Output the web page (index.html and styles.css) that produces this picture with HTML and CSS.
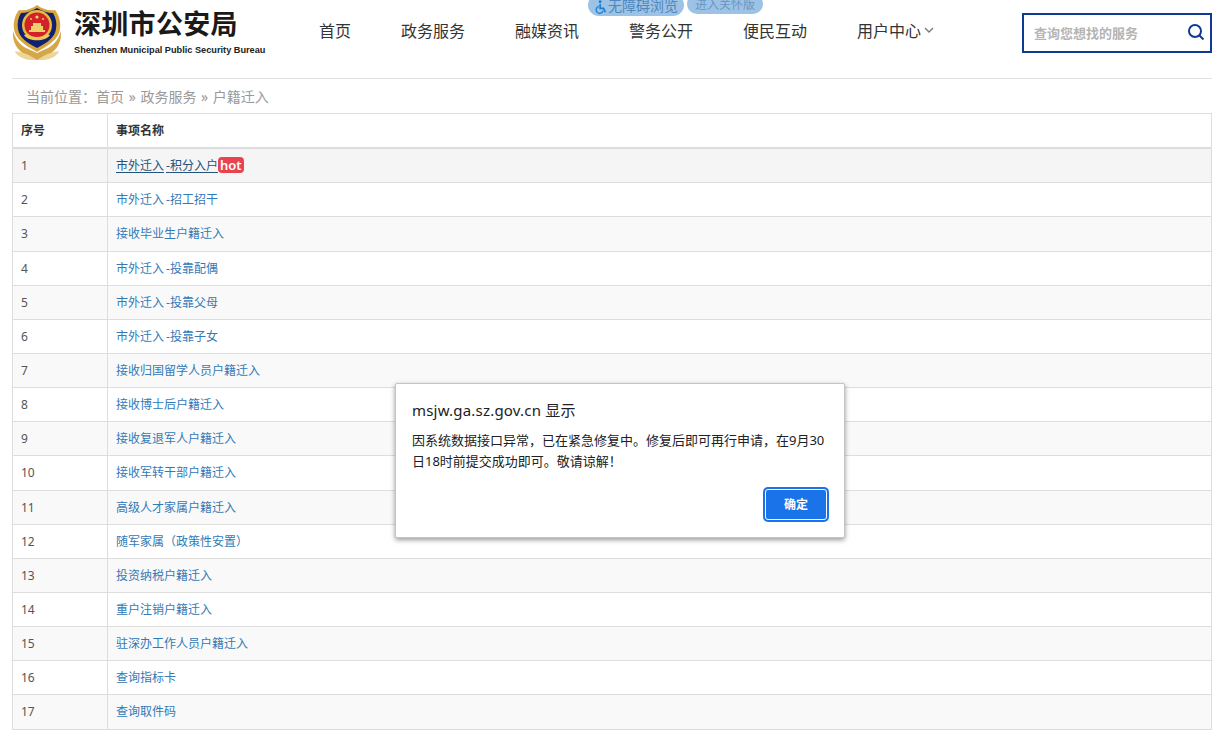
FILE: index.html
```html
<!DOCTYPE html>
<html lang="zh-CN">
<head>
<meta charset="utf-8">
<title>深圳市公安局</title>
<link rel="stylesheet" href="styles.css">
</head>
<body>
<div class="page">
  <header class="header">
    <a class="brand">
      <svg class="emblem" viewBox="0 0 50 56" width="50" height="56">
        <path d="M1 26C0 38 6 46 14 50L20 55H30L36 50C44 46 50 38 49 26C47 33 43 39 36 43L25 48L14 43C7 39 3 33 1 26Z" fill="#d5a748"/>
        <path d="M3 46C8 47 15 48 25 55C35 48 42 47 47 46C46 50 40 54 32 55H18C10 54 4 50 3 46Z" fill="#ecd596"/>
        <path d="M25 0C30 4 37 6 43 5C47 10 49 17 48 24C47 33 38 40 25 47C12 40 3 33 2 24C1 17 3 10 7 5C13 6 20 4 25 0Z" fill="#d8a63f"/>
        <path d="M25 3C30 6 36 8 41 8C44 13 45 18 44 24C43 32 35 38 25 43C15 38 7 32 6 24C5 18 6 13 9 8C14 8 20 6 25 3Z" fill="#12216f"/>
        <circle cx="25" cy="20" r="15" fill="#e6b93f"/>
        <circle cx="25" cy="20" r="12.5" fill="#d2232a"/>
        <path d="M17 25H33V27H17ZM19 21H31V25H19ZM21 18H29V21H21Z" fill="#f0cf6a"/>
        <circle cx="25" cy="12" r="1.6" fill="#f5d76a"/>
        <circle cx="19" cy="14" r=".9" fill="#f5d76a"/>
        <circle cx="31" cy="14" r=".9" fill="#f5d76a"/>
        <path d="M12 30C16 37 34 37 38 30L35 29C31 33 19 33 15 29Z" fill="#eec95a"/>
      </svg>
      <span class="brand-text">
        <span class="brand-title">深圳市公安局</span>
        <span class="brand-sub">Shenzhen Municipal Public Security Bureau</span>
      </span>
    </a>
    <div class="nav-col">
      <div class="pills">
        <span class="pill pill-a">
          <svg class="wheel" viewBox="0 0 16 16" width="14" height="14"><circle cx="7" cy="2" r="1.6" fill="#1b7fd0"/><path d="M7 4.5V9.5H11L13 14" fill="none" stroke="#1b7fd0" stroke-width="1.9"/><path d="M5.4 7.4A4 4 0 1 0 10.4 12.2" fill="none" stroke="#1b7fd0" stroke-width="1.5"/></svg>无障碍浏览
        </span>
        <span class="pill pill-b">进入关怀版</span>
      </div>
      <nav class="nav">
        <a>首页</a>
        <a>政务服务</a>
        <a>融媒资讯</a>
        <a>警务公开</a>
        <a>便民互动</a>
        <a class="nav-user">用户中心<svg viewBox="0 0 10 6" width="10" height="6"><path d="M1 1L5 5L9 1" fill="none" stroke="#777" stroke-width="1.3"/></svg></a>
      </nav>
    </div>
    <div class="search">
      <span class="search-text">查询您想找的服务</span>
      <svg viewBox="0 0 18 18" width="18" height="18"><circle cx="8" cy="8" r="6" fill="none" stroke="#0f3a94" stroke-width="2"/><path d="M12.5 12.5L16.5 16.5" stroke="#0f3a94" stroke-width="2"/></svg>
    </div>
  </header>
  <div class="crumb">当前位置：首页 <i>»</i> 政务服务 <i>»</i> 户籍迁入</div>
  <table class="table">
    <thead><tr><th class="c1">序号</th><th>事项名称</th></tr></thead>
    <tbody>
      <tr class="hover"><td>1</td><td><a class="active">市外迁入<span class="dash">-</span>积分入户</a><span class="hot">hot</span></td></tr>
      <tr><td>2</td><td><a>市外迁入<span class="dash">-</span>招工招干</a></td></tr>
      <tr><td>3</td><td><a>接收毕业生户籍迁入</a></td></tr>
      <tr><td>4</td><td><a>市外迁入<span class="dash">-</span>投靠配偶</a></td></tr>
      <tr><td>5</td><td><a>市外迁入<span class="dash">-</span>投靠父母</a></td></tr>
      <tr><td>6</td><td><a>市外迁入<span class="dash">-</span>投靠子女</a></td></tr>
      <tr><td>7</td><td><a>接收归国留学人员户籍迁入</a></td></tr>
      <tr><td>8</td><td><a>接收博士后户籍迁入</a></td></tr>
      <tr><td>9</td><td><a>接收复退军人户籍迁入</a></td></tr>
      <tr><td>10</td><td><a>接收军转干部户籍迁入</a></td></tr>
      <tr><td>11</td><td><a>高级人才家属户籍迁入</a></td></tr>
      <tr><td>12</td><td><a>随军家属（政策性安置）</a></td></tr>
      <tr><td>13</td><td><a>投资纳税户籍迁入</a></td></tr>
      <tr><td>14</td><td><a>重户注销户籍迁入</a></td></tr>
      <tr><td>15</td><td><a>驻深办工作人员户籍迁入</a></td></tr>
      <tr><td>16</td><td><a>查询指标卡</a></td></tr>
      <tr><td>17</td><td><a>查询取件码</a></td></tr>
    </tbody>
  </table>
</div>
<div class="dialog">
  <div class="dialog-title">msjw.ga.sz.gov.cn 显示</div>
  <div class="dialog-body">因系统数据接口异常，已在紧急修复中。修复后即可再行申请，在9月30日18时前提交成功即可。敬请谅解！</div>
  <div class="dialog-actions"><button class="ok">确定</button></div>
</div>
</body>
</html>
```
FILE: styles.css
```css
* { box-sizing: border-box; }
html, body { margin: 0; height: 743px; overflow: hidden; background: #fff; }
body { font-family: "Noto Sans", "Noto Sans CJK SC", sans-serif; font-size: 12px; color: #333; position: relative; }
.page { width: 1200px; margin-left: 12px; }

.header { height: 79px; border-bottom: 1px solid #e2e2e2; display: flex; align-items: flex-start; overflow: hidden; }
.brand { display: flex; width: 307px; flex: none; padding-top: 5px; }
.emblem { flex: none; margin-right: 12px; }
.brand-text { display: flex; flex-direction: column; }
.brand-title { font-size: 27px; letter-spacing: .3px; line-height: 30px; font-weight: 700; color: #1a1a1a; font-family: "Noto Sans CJK SC", sans-serif; margin-top: 3px; }
.brand-sub { font: 700 9.2px/12px "Liberation Sans", sans-serif; color: #222; margin-top: 6px; white-space: nowrap; }

.nav-col { width: 703px; flex: none; }
.pills { display: flex; gap: 3px; margin-left: 269px; margin-top: -6px; height: 22px; align-items: flex-start; }
.pill { background: #9cc3e6; color: #4f87bd; line-height: 22px; height: 22px; border-radius: 11px; display: flex; align-items: center; white-space: nowrap; }
.pill-a { width: 96px; padding: 2px 0 0 6px; font-size: 14px; }
.pill-b { width: 76px; height: 20px; line-height: 20px; padding-top: 1px; justify-content: center; color: #6a97c4; font-size: 12px; }
.wheel { flex: none; margin-top: 1px; }

.nav { display: flex; gap: 50px; margin-top: 2px; }
.nav a { font-size: 16px; line-height: 24px; color: #333; white-space: nowrap; font-family: "Noto Sans CJK SC", sans-serif; }
.nav-user { display: flex; align-items: center; gap: 3px; }

.search { width: 190px; height: 40px; margin-top: 13px; border: 2px solid #0f3a94; display: flex; align-items: center; justify-content: space-between; padding: 0 5px 2px 10px; flex: none; }
.search-text { font-size: 13px; font-weight: 700; color: #b4b4b4; font-family: "Noto Sans CJK SC", sans-serif; }

.crumb { height: 34px; padding: 8px 14px 0; font-size: 14px; line-height: 20px; color: #999; }
.crumb i { font-style: normal; margin: 0 1px; }

.table { width: 100%; border-collapse: collapse; border: 1px solid #ddd; table-layout: fixed; font-size: 12px; }
.table th, .table td { border: 1px solid #ddd; padding: 8px; line-height: 17.14px; text-align: left; }
.table th { border-bottom-width: 2px; font-weight: 700; color: #333; }
.table td:first-child { color: #555; }
.table .c1 { width: 95px; }
.table tbody tr:nth-child(odd) { background: #f9f9f9; }
.table tbody tr.hover { background: #f5f5f5; }
.table a { color: #337ab7; }
.table a.active { color: #23527c; text-decoration: underline; text-decoration-thickness: 1px; text-underline-offset: 2px; text-decoration-skip-ink: none; }
.dash { padding-left: 2px; }
.hot { display: inline-block; background: #e8434f; color: #fff; font-size: 13px; font-weight: 600; line-height: 16px; padding: 0 2px; border-radius: 4px; }

.dialog { position: absolute; left: 395px; top: 383px; width: 450px; height: 155px; background: #fff; border: 1px solid #c4c4c4; border-radius: 2px; box-shadow: 0 2px 5px rgba(0,0,0,.4); padding: 15px 16px 0; }
.dialog-title { font-size: 15px; letter-spacing: .2px; line-height: 22px; color: #202124; }
.dialog-body { margin-top: 9px; font-size: 13px; line-height: 21px; color: #202124; height: 42px; }
.dialog-actions { display: flex; justify-content: flex-end; margin-top: 17px; padding-right: 1px; }
.ok { width: 62px; height: 31px; background: #1a73e8; color: #fff; border: 1px solid #fff; box-shadow: 0 0 0 2px #1a73e8; border-radius: 3px; font: 700 12px/27px "Noto Sans CJK SC", sans-serif; padding: 0 0 2px; }
```
